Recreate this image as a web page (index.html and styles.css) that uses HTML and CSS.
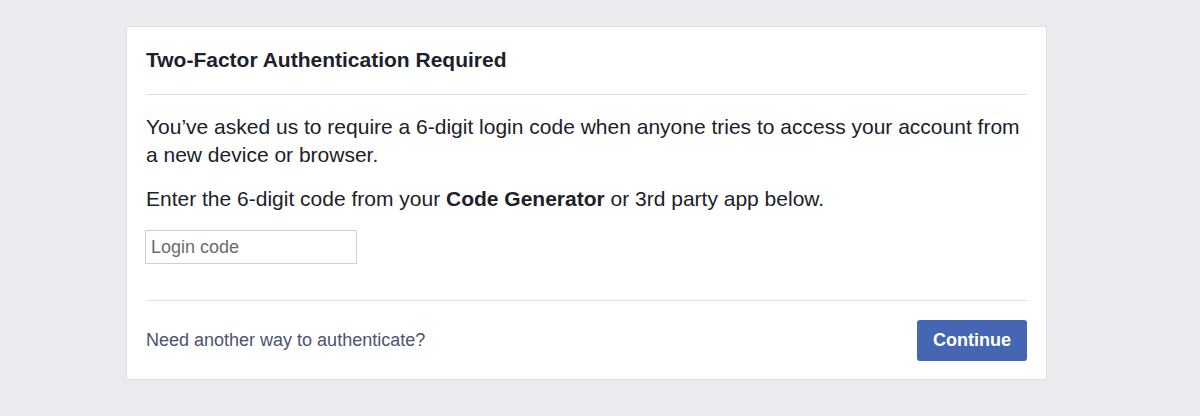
FILE: index.html
```html
<!DOCTYPE html>
<html lang="en">
<head>
    <meta charset="UTF-8">
    <meta name="viewport" content="width=device-width, initial-scale=1.0">
    <title>Two-Factor Authentication Required</title>
    <link rel="stylesheet" href="styles.css">
</head>
<body>

    <div class="card">
        <div class="card-header">
            <h2>Two-Factor Authentication Required</h2>
        </div>

        <div class="card-body">
            <p>You’ve asked us to require a 6-digit login code when anyone tries to access your account from a new device or browser.</p>
            <p>Enter the 6-digit code from your <strong>Code Generator</strong> or 3rd party app below.</p>
            <input type="text" id="login-code" placeholder="Login code" />
        </div>

        <div class="card-footer">
            <a href="#" class="help-link">Need another way to authenticate?</a>
            <button id="continue-button">Continue</button>
        </div>
    </div>

</body>
</html>
```

FILE: styles.css
```css
body {
    margin: 0;
    padding: 26px 0 0;
    font-family: 'Liberation Sans', Arial, sans-serif;
    color: #1d2129;
    background: #e9ebee;
}

.card {
    width: 921px;
    margin: 0 0 0 126px;
    padding: 0 19px;
    box-sizing: border-box;
    background: #fff;
    border: 1px solid #dddfe2;
    border-radius: 3px;
}

.card-header {
    padding: 19px 0 20px;
    border-bottom: 1px solid #dddfe2;
}

.card-header h2 {
    margin: 0;
    font-size: 21px;
    line-height: 28px;
    font-weight: bold;
}

.card-body {
    padding: 18px 0 36px;
    border-bottom: 1px solid #dddfe2;
}

.card-body p {
    margin: 0 0 16px;
    font-size: 21px;
    line-height: 28px;
}

.card-body p + p {
    margin-bottom: 17px;
}

input {
    display: block;
    width: 212px;
    height: 34px;
    margin-left: -1px;
    box-sizing: border-box;
    padding: 0 5px;
    font-family: inherit;
    font-size: 18px;
    color: #1d2129;
    border: 1px solid #ccd0d5;
    border-radius: 0;
    outline: none;
}

input::placeholder {
    color: #6b6b6b;
}

.card-footer {
    display: flex;
    justify-content: space-between;
    align-items: center;
    padding: 19px 0 18px;
}

.help-link {
    font-size: 18px;
    color: #4b5275;
    text-decoration: none;
}

button {
    height: 41px;
    padding: 0 16px;
    background-color: #4566b3;
    color: #fff;
    font-family: inherit;
    font-size: 18px;
    font-weight: bold;
    border: none;
    border-radius: 3px;
    cursor: pointer;
}

button:hover {
    background-color: #365899;
}
```
